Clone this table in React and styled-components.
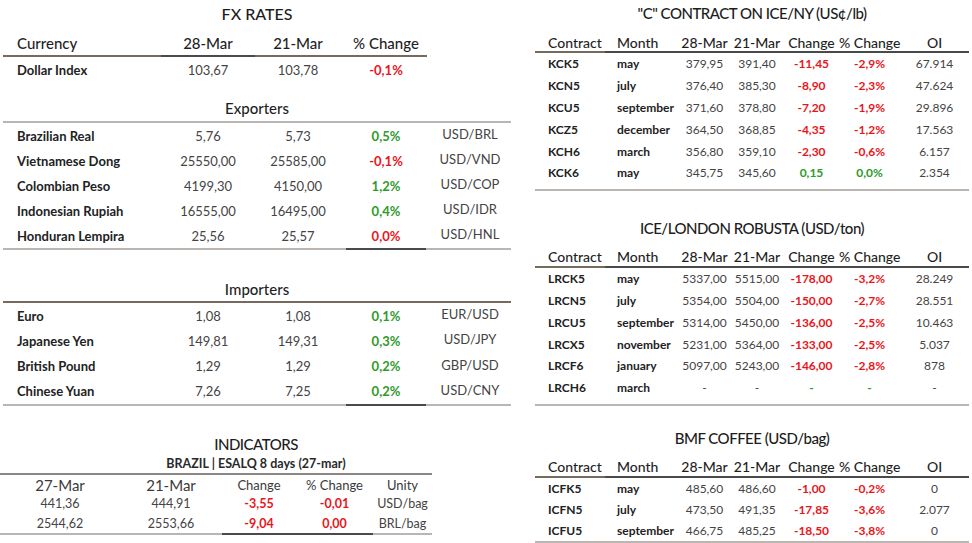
import styled, { createGlobalStyle } from "styled-components";

const GlobalStyle = createGlobalStyle`
  body {
    margin: 0;
    background: #fff;
    font-family: Lato, "Liberation Sans", sans-serif;
    color: #222;
  }
`;

const RED = "#e8161b";
const GREEN = "#2e9a2a";
const LIGHT_RULE = "#bbb6b1";
const BROWN_RULE = "#76695e";

const FX_COLS = "160px 90px 90px 86px 82px";
const ICE_COLS = "82px 62px 51px 54px 55px 61px 69px";
const IND_COLS = "120px 102px 74px 77px 59px";

const Page = styled.div`
  display: flex;
  width: 972px;
  height: 543px;
  overflow: hidden;
`;

const LeftColumn = styled.div`
  width: 512px;
  display: flex;
  flex-direction: column;
`;

const FxBlock = styled.div`
  padding-left: 3px;
  width: 508px;
`;

const RightColumn = styled.div`
  width: 434px;
  margin-left: 23px;
  display: flex;
  flex-direction: column;
`;

// compact titles are narrower in the source, so they get a tighter setting
const Title = styled.div`
  height: ${(p) => p.$h || 26}px;
  line-height: ${(p) => p.$h || 26}px;
  margin-top: ${(p) => p.$mt || 0}px;
  text-align: center;
  font-size: ${(p) => (p.$compact ? 15 : 16)}px;
  letter-spacing: ${(p) => (p.$compact ? "-0.5px" : "0")};
  font-weight: 500;
  color: #1d1d1d;
  white-space: nowrap;
`;

const SubTitle = styled.div`
  height: 18px;
  line-height: 18px;
  text-align: center;
  font-size: 12.5px;
  font-weight: 700;
  color: #2a2a2a;
`;

const Heading = styled.div`
  height: ${(p) => p.$h}px;
  line-height: ${(p) => p.$h}px;
  margin-top: ${(p) => p.$mt}px;
  text-align: center;
  font-size: 15px;
  font-weight: 500;
  color: #1f1f1f;
`;

const Rule = styled.div`
  height: 2px;
  width: ${(p) => p.$w}px;
  background: ${(p) =>
    p.$dark
      ? `linear-gradient(to right, ${p.$color} ${p.$dark[0]}px, #4a4a4a ${p.$dark[0]}px, #4a4a4a ${p.$dark[1]}px, ${p.$color} ${p.$dark[1]}px)`
      : p.$color};
`;

const Row = styled.div`
  display: grid;
  grid-template-columns: ${(p) => p.$cols};
  align-items: center;
  height: ${(p) => p.$h}px;
  padding-top: ${(p) => p.$pt || 0}px;
  white-space: nowrap;
`;

const Rows = styled.div`
  padding-bottom: ${(p) => p.$pb || 0}px;
`;

const HeadCell = styled.div`
  font-size: ${(p) => p.$size || 15}px;
  font-weight: ${(p) => p.$weight || 500};
  color: ${(p) => (p.$weight === 400 ? "#3a3a3a" : "#1f1f1f")};
  text-align: ${(p) => (p.$left ? "left" : "center")};
  padding-left: ${(p) => p.$pl || 0}px;
`;

const Label = styled.div`
  font-size: ${(p) => p.$size || 13}px;
  font-weight: 700;
  color: #222;
  padding-left: ${(p) => p.$pl || 0}px;
`;

const Num = styled.div`
  font-size: ${(p) => p.$size || 13}px;
  color: #444;
  text-align: center;
  padding-bottom: ${(p) => p.$lift || 0}px;
`;

const Delta = styled.div`
  font-size: ${(p) => p.$size || 13}px;
  font-weight: 700;
  text-align: center;
  color: ${(p) => (p.$tone === "up" ? GREEN : RED)};
`;

const exporters = [
  ["Brazilian Real", "5,76", "5,73", "0,5%", "up", "USD/BRL"],
  ["Vietnamese Dong", "25550,00", "25585,00", "-0,1%", "down", "USD/VND"],
  ["Colombian Peso", "4199,30", "4150,00", "1,2%", "up", "USD/COP"],
  ["Indonesian Rupiah", "16555,00", "16495,00", "0,4%", "up", "USD/IDR"],
  ["Honduran Lempira", "25,56", "25,57", "0,0%", "down", "USD/HNL"],
];

const importers = [
  ["Euro", "1,08", "1,08", "0,1%", "up", "EUR/USD"],
  ["Japanese Yen", "149,81", "149,31", "0,3%", "up", "USD/JPY"],
  ["British Pound", "1,29", "1,29", "0,2%", "up", "GBP/USD"],
  ["Chinese Yuan", "7,26", "7,25", "0,2%", "up", "USD/CNY"],
];

const indicators = [
  ["441,36", "444,91", "-3,55", "-0,01", "USD/bag"],
  ["2544,62", "2553,66", "-9,04", "0,00", "BRL/bag"],
];

const iceNy = [
  ["KCK5", "may", "379,95", "391,40", "-11,45", "-2,9%", "67.914", "down"],
  ["KCN5", "july", "376,40", "385,30", "-8,90", "-2,3%", "47.624", "down"],
  ["KCU5", "september", "371,60", "378,80", "-7,20", "-1,9%", "29.896", "down"],
  ["KCZ5", "december", "364,50", "368,85", "-4,35", "-1,2%", "17.563", "down"],
  ["KCH6", "march", "356,80", "359,10", "-2,30", "-0,6%", "6.157", "down"],
  ["KCK6", "may", "345,75", "345,60", "0,15", "0,0%", "2.354", "up"],
];

const robusta = [
  ["LRCK5", "may", "5337,00", "5515,00", "-178,00", "-3,2%", "28.249", "down"],
  ["LRCN5", "july", "5354,00", "5504,00", "-150,00", "-2,7%", "28.551", "down"],
  ["LRCU5", "september", "5314,00", "5450,00", "-136,00", "-2,5%", "10.463", "down"],
  ["LRCX5", "november", "5231,00", "5364,00", "-133,00", "-2,5%", "5.037", "down"],
  ["LRCF6", "january", "5097,00", "5243,00", "-146,00", "-2,8%", "878", "down"],
  ["LRCH6", "march", "-", "-", "-", "-", "-", "up"],
];

const bmf = [
  ["ICFK5", "may", "485,60", "486,60", "-1,00", "-0,2%", "0", "down"],
  ["ICFN5", "july", "473,50", "491,35", "-17,85", "-3,6%", "2.077", "down"],
  ["ICFU5", "september", "466,75", "485,25", "-18,50", "-3,8%", "0", "down"],
];

function FxRow({ row, h }) {
  const [name, a, b, pct, tone, pair] = row;
  return (
    <Row $cols={FX_COLS} $h={h}>
      <Label $pl={14}>{name}</Label>
      <Num>{a}</Num>
      <Num>{b}</Num>
      <Delta $tone={tone}>{pct}</Delta>
      <Num $lift={3}>{pair}</Num>
    </Row>
  );
}

function FxRates() {
  return (
    <FxBlock>
      <Title $h={28}>FX RATES</Title>
      <Row $cols={FX_COLS} $h={24} $pt={3}>
        <HeadCell $left $pl={14}>Currency</HeadCell>
        <HeadCell>28-Mar</HeadCell>
        <HeadCell>21-Mar</HeadCell>
        <HeadCell>% Change</HeadCell>
      </Row>
      <Rule $w={424} $color={BROWN_RULE} $dark={[158, 252]} />
      <Row $cols={FX_COLS} $h={26}>
        <Label $pl={14}>Dollar Index</Label>
        <Num>103,67</Num>
        <Num>103,78</Num>
        <Delta $tone="down">-0,1%</Delta>
      </Row>

      <Heading $mt={12} $h={26}>Exporters</Heading>
      <Rule $w={508} $color={LIGHT_RULE} />
      {exporters.map((r) => (
        <FxRow key={r[0]} row={r} h={25} />
      ))}
      <Rule $w={508} $color={LIGHT_RULE} $dark={[343, 423]} />

      <Heading $mt={27} $h={24}>Importers</Heading>
      <Rule $w={508} $color={BROWN_RULE} />
      {importers.map((r) => (
        <FxRow key={r[0]} row={r} h={25.25} />
      ))}
      <Rule $w={508} $color={LIGHT_RULE} $dark={[343, 423]} />
    </FxBlock>
  );
}

function Indicators() {
  return (
    <div>
      <Title $h={22} $mt={27} $compact>INDICATORS</Title>
      <SubTitle>BRAZIL | ESALQ 8 days (27-mar)</SubTitle>
      <Rule $w={432} $color="#8b8681" />
      <Row $cols={IND_COLS} $h={19}>
        <HeadCell $weight={400} $size={15}>27-Mar</HeadCell>
        <HeadCell $weight={400} $size={15}>21-Mar</HeadCell>
        <HeadCell $weight={400} $size={13}>Change</HeadCell>
        <HeadCell $weight={400} $size={13}>% Change</HeadCell>
        <HeadCell $weight={400} $size={13}>Unity</HeadCell>
      </Row>
      {indicators.map(([a, b, c, d, unit]) => (
        <Row key={unit} $cols={IND_COLS} $h={19.5}>
          <Num $size={12.5}>{a}</Num>
          <Num $size={12.5}>{b}</Num>
          <Delta $size={12.5} $tone="down">{c}</Delta>
          <Delta $size={12.5} $tone="down">{d}</Delta>
          <Num $size={12.5}>{unit}</Num>
        </Row>
      ))}
      <Rule $w={432} $color={LIGHT_RULE} $dark={[222, 373]} />
    </div>
  );
}

function ContractTable({ title, rows, mt, rowH, pb }) {
  return (
    <div>
      <Title $mt={mt} $compact>{title}</Title>
      <Row $cols={ICE_COLS} $h={18} $pt={7}>
        <HeadCell $left $pl={13} $size={14}>Contract</HeadCell>
        <HeadCell $left $size={14}>Month</HeadCell>
        <HeadCell $size={14}>28-Mar</HeadCell>
        <HeadCell $size={14}>21-Mar</HeadCell>
        <HeadCell $size={14}>Change</HeadCell>
        <HeadCell $size={14}>% Change</HeadCell>
        <HeadCell $size={14}>OI</HeadCell>
      </Row>
      <Rule $w={434} $color={BROWN_RULE} $dark={[70, 434]} />
      <Rows $pb={pb}>
        {rows.map(([code, month, a, b, chg, pct, oi, tone]) => (
          <Row key={code} $cols={ICE_COLS} $h={rowH}>
            <Label $pl={13} $size={12}>{code}</Label>
            <Label $size={12}>{month}</Label>
            <Num $size={12}>{a}</Num>
            <Num $size={12}>{b}</Num>
            <Delta $size={12} $tone={tone}>{chg}</Delta>
            <Delta $size={12} $tone={tone}>{pct}</Delta>
            <Num $size={12}>{oi}</Num>
          </Row>
        ))}
      </Rows>
      <Rule $w={434} $color={LIGHT_RULE} />
    </div>
  );
}

export default function App() {
  return (
    <>
      <GlobalStyle />
      <Page>
        <LeftColumn>
          <FxRates />
          <Indicators />
        </LeftColumn>
        <RightColumn>
          <ContractTable
            title={'"C" CONTRACT ON ICE/NY (US¢/lb)'}
            rows={iceNy}
            mt={0}
            rowH={21.8}
            pb={5}
          />
          <ContractTable
            title="ICE/LONDON ROBUSTA (USD/ton)"
            rows={robusta}
            mt={24}
            rowH={21.8}
            pb={5}
          />
          <ContractTable
            title="BMF COFFEE (USD/bag)"
            rows={bmf}
            mt={19}
            rowH={21.2}
            pb={0}
          />
        </RightColumn>
      </Page>
    </>
  );
}
